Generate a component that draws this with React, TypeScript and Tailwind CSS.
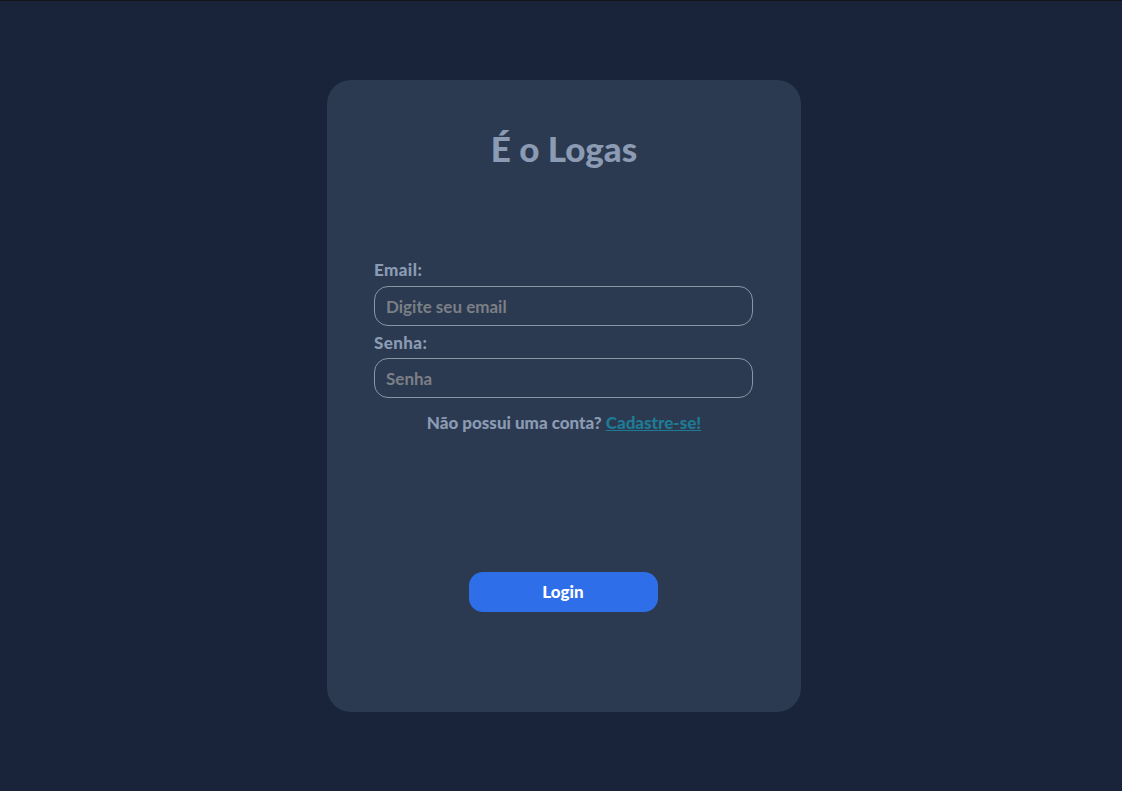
export default function App() {
  return (
    <div className="min-h-[791px] bg-[#19243b] border-t border-[#111318] flex justify-center pl-[6px] font-['Lato',sans-serif]">
      <div className="mt-[79px] mb-[79px] w-[474px] h-[632px] rounded-[24px] bg-[#2b3a50] px-[47px] pt-[48px] flex flex-col items-stretch">
        <h1 className="h-[40px] text-center text-[35px] leading-[40px] font-black text-[#8b9bb4]">
          É o Logas
        </h1>
        <form className="mt-[90px] flex flex-col">
          <label className="h-[24px] leading-[24px] text-[17px] tracking-[0.4px] font-black text-[#8b9bb4]">Email:</label>
          <input
            type="email"
            placeholder="Digite seu email"
            className="mt-[4px] h-[40px] w-[379px] rounded-[14px] border border-[#8b95a5] bg-transparent px-[11px] text-[17px] font-bold text-[#cfd6e0] placeholder:text-[#7b7f86] outline-none"
          />
          <label className="mt-[5px] mb-[3px] h-[24px] leading-[24px] text-[17px] tracking-[0.4px] font-black text-[#8b9bb4]">Senha:</label>
          <input
            type="password"
            placeholder="Senha"
            className="h-[40px] w-[379px] rounded-[14px] border border-[#8b95a5] bg-transparent px-[11px] text-[17px] font-bold text-[#cfd6e0] placeholder:text-[#7b7f86] outline-none"
          />
          <p className="mt-[13px] h-[24px] leading-[24px] text-center text-[17px] font-black text-[#8b9bb4]">
            Não possui uma conta?{" "}
            <a href="#" className="text-[#1f7a94] underline">
              Cadastre-se!
            </a>
          </p>
          <button
            type="button"
            className="mt-[137px] self-center -ml-[2px] h-[40px] w-[189px] rounded-[14px] bg-[#2f6ee9] text-[17px] font-black text-white"
          >
            Login
          </button>
        </form>
      </div>
    </div>
  );
}
